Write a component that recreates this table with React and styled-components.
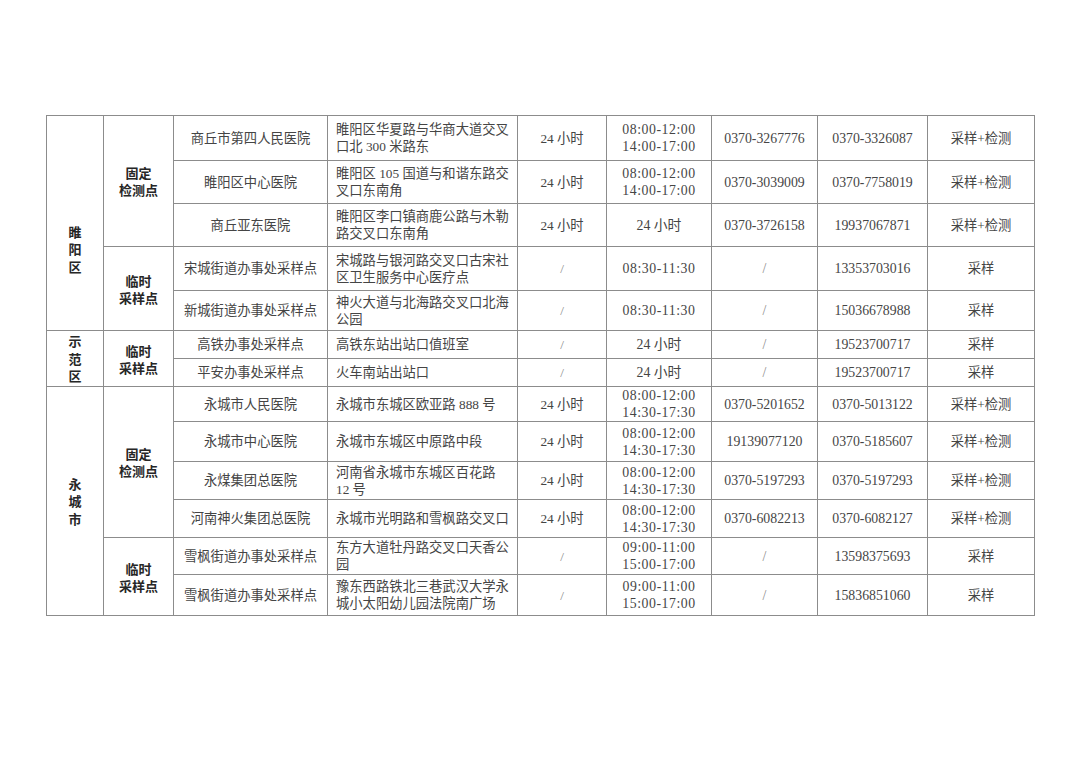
import React from 'react';
import styled, { createGlobalStyle } from 'styled-components';

const Global = createGlobalStyle`
  html, body { margin: 0; padding: 0; background: #fff; }
  body { font-family: "Liberation Serif", "Noto Sans CJK SC", serif; }
`;

const Page = styled.main`
  min-height: 764px;
  box-sizing: border-box;
  padding: 115px 0 0 46px;
  background: #fff;
`;

const Table = styled.table`
  width: 988px;
  table-layout: fixed;
  border-collapse: collapse;
  font-family: "Liberation Serif", "Noto Sans CJK SC", serif;
  font-size: 13.3px;
  color: #454545;
  border: 1px solid #6f6f6f;
`;

const Row = styled.tr`
  height: ${(p) => p.$h}px;
`;

const Cell = styled.td`
  border: 1px solid #8c8c8c;
  padding: 0;
  text-align: center;
  vertical-align: middle;
  line-height: 17px;
  white-space: nowrap;
  overflow: hidden;
`;

const AddrCell = styled(Cell)`
  text-align: left;
  padding-left: 8px;
`;

const NumCell = styled(Cell)`
  font-size: 13.8px;
  color: ${(p) => (p.$muted ? '#8a8a8a' : 'inherit')};
`;

const TimeCell = styled(Cell)`
  font-size: 13.8px;
  letter-spacing: ${(p) => (p.$plain ? 0 : 0.55)}px;
`;

const MutedCell = styled(Cell)`
  color: ${(p) => (p.$muted ? '#8a8a8a' : 'inherit')};
`;

const LabelCell = styled(Cell)`
  font-family: "Noto Sans CJK SC", sans-serif;
  font-weight: 700;
  font-size: 13px;
  color: #262626;
  padding-top: ${(p) => p.$shift || 0}px;
`;

const Stack = styled.span`
  display: flex;
  flex-direction: column;
  align-items: center;
  line-height: 17.5px;
`;

const Lines = ({ lines }) =>
  lines.map((l, i) => (
    <React.Fragment key={i}>
      {i > 0 && <br />}
      {l}
    </React.Fragment>
  ));

const FIX = ['固定', '检测点'];
const TMP = ['临时', '采样点'];
const T1 = ['08:00-12:00', '14:00-17:00'];
const T2 = ['08:00-12:00', '14:30-17:30'];
const T3 = ['09:00-11:00', '15:00-17:00'];

const regions = [
  {
    name: '睢阳区',
    shift: 52,
    groups: [
      {
        type: FIX,
        rows: [
          { h: 45, name: '商丘市第四人民医院', addr: ['睢阳区华夏路与华商大道交叉', '口北 300 米路东'], hours: '24 小时', time: T1, p1: '0370-3267776', p2: '0370-3326087', svc: '采样+检测' },
          { h: 43, name: '睢阳区中心医院', addr: ['睢阳区 105 国道与和谐东路交', '叉口东南角'], hours: '24 小时', time: T1, p1: '0370-3039009', p2: '0370-7758019', svc: '采样+检测' },
          { h: 43, name: '商丘亚东医院', addr: ['睢阳区李口镇商鹿公路与木勒', '路交叉口东南角'], hours: '24 小时', time: ['24 小时'], p1: '0370-3726158', p2: '19937067871', svc: '采样+检测' },
        ],
      },
      {
        type: TMP,
        rows: [
          { h: 44, name: '宋城街道办事处采样点', addr: ['宋城路与银河路交叉口古宋社', '区卫生服务中心医疗点'], hours: '/', time: ['08:30-11:30'], p1: '/', p2: '13353703016', svc: '采样' },
          { h: 40, name: '新城街道办事处采样点', addr: ['神火大道与北海路交叉口北海', '公园'], hours: '/', time: ['08:30-11:30'], p1: '/', p2: '15036678988', svc: '采样' },
        ],
      },
    ],
  },
  {
    name: '示范区',
    shift: 0,
    groups: [
      {
        type: TMP,
        rows: [
          { h: 28, name: '高铁办事处采样点', addr: ['高铁东站出站口值班室'], hours: '/', time: ['24 小时'], p1: '/', p2: '19523700717', svc: '采样' },
          { h: 28, name: '平安办事处采样点', addr: ['火车南站出站口'], hours: '/', time: ['24 小时'], p1: '/', p2: '19523700717', svc: '采样' },
        ],
      },
    ],
  },
  {
    name: '永城市',
    shift: 0,
    groups: [
      {
        type: FIX,
        rows: [
          { h: 34, name: '永城市人民医院', addr: ['永城市东城区欧亚路 888 号'], hours: '24 小时', time: T2, p1: '0370-5201652', p2: '0370-5013122', svc: '采样+检测' },
          { h: 40, name: '永城市中心医院', addr: ['永城市东城区中原路中段'], hours: '24 小时', time: T2, p1: '19139077120', p2: '0370-5185607', svc: '采样+检测' },
          { h: 38, name: '永煤集团总医院', addr: ['河南省永城市东城区百花路', '12 号'], hours: '24 小时', time: T2, p1: '0370-5197293', p2: '0370-5197293', svc: '采样+检测' },
          { h: 38, name: '河南神火集团总医院', addr: ['永城市光明路和雪枫路交叉口'], hours: '24 小时', time: T2, p1: '0370-6082213', p2: '0370-6082127', svc: '采样+检测' },
        ],
      },
      {
        type: TMP,
        rows: [
          { h: 37, name: '雪枫街道办事处采样点', addr: ['东方大道牡丹路交叉口天香公', '园'], hours: '/', time: T3, p1: '/', p2: '13598375693', svc: '采样' },
          { h: 41, name: '雪枫街道办事处采样点', addr: ['豫东西路铁北三巷武汉大学永', '城小太阳幼儿园法院南广场'], hours: '/', time: T3, p1: '/', p2: '15836851060', svc: '采样' },
        ],
      },
    ],
  },
];

const widths = [57, 70, 154, 190, 89, 105, 106, 110, 107];

export default function App() {
  const body = [];
  regions.forEach((reg) => {
    const regionSpan = reg.groups.reduce((n, g) => n + g.rows.length, 0);
    reg.groups.forEach((g, gi) => {
      g.rows.forEach((r, ri) => {
        body.push(
          <Row key={`${reg.name}-${gi}-${ri}`} $h={r.h}>
            {gi === 0 && ri === 0 && (
              <LabelCell rowSpan={regionSpan} $shift={reg.shift}>
                <Stack>
                  {reg.name.split('').map((c, i) => (
                    <span key={i}>{c}</span>
                  ))}
                </Stack>
              </LabelCell>
            )}
            {ri === 0 && (
              <LabelCell rowSpan={g.rows.length}>
                <Lines lines={g.type} />
              </LabelCell>
            )}
            <Cell>{r.name}</Cell>
            <AddrCell>
              <Lines lines={r.addr} />
            </AddrCell>
            <MutedCell $muted={r.hours === '/'}>{r.hours}</MutedCell>
            <TimeCell $plain={r.time[0].includes('小时')}>
              <Lines lines={r.time} />
            </TimeCell>
            <NumCell $muted={r.p1 === '/'}>{r.p1}</NumCell>
            <NumCell>{r.p2}</NumCell>
            <Cell>{r.svc}</Cell>
          </Row>
        );
      });
    });
  });

  return (
    <>
      <Global />
      <Page>
        <Table>
          <colgroup>
            {widths.map((w, i) => (
              <col key={i} width={w} />
            ))}
          </colgroup>
          <tbody>{body}</tbody>
        </Table>
      </Page>
    </>
  );
}
